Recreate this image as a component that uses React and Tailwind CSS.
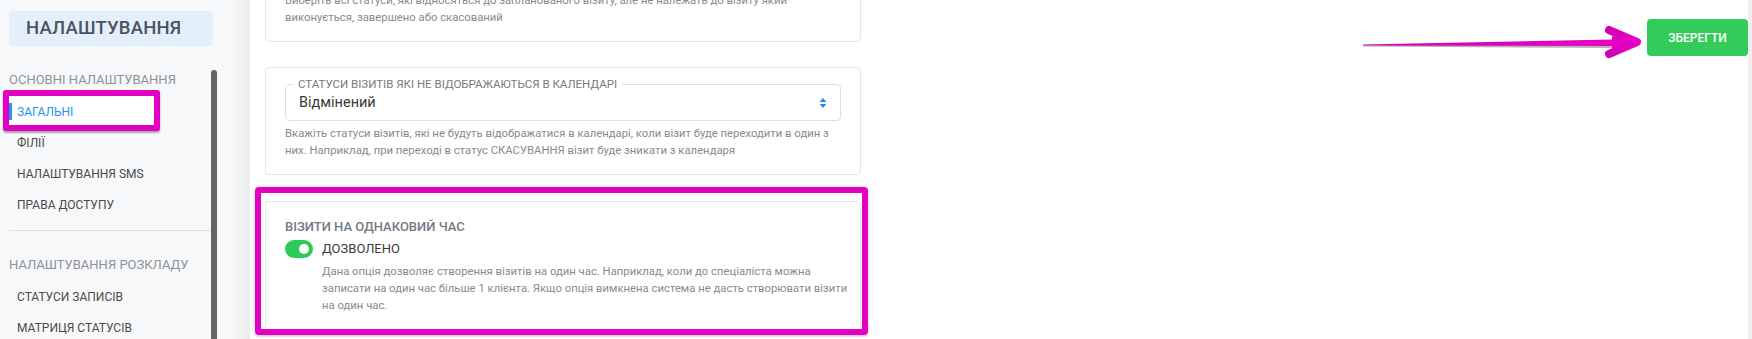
import React from 'react';

const font = { fontFamily: 'Roboto, "Noto Sans", sans-serif' };

const SelectArrows = () => (
    <svg width="8" height="10" viewBox="0 0 8 10" className="shrink-0">
        <path d="M4 0 L7.5 4 L0.5 4 Z" fill="#2d8cf0" />
        <path d="M4 10 L7.5 6 L0.5 6 Z" fill="#2d8cf0" />
    </svg>
);

const StatusCard = ({ label, value, help, className }) => (
    <div className={"rounded-[4px] border border-[#e5e8ec] bg-white px-[19px] pt-[16px] pb-[15px] " + className}>
        <div className="relative flex h-[37px] items-center justify-between rounded-[4px] border border-[#dcdfe4] pl-[13px] pr-[13px]">
            <span className="absolute -top-[9px] left-[7px] bg-white px-[5px] text-[11.5px] leading-[16px] text-[#7a7a7a]">{label}</span>
            <span className="text-[14.5px] text-[#3a3a3a]">{value}</span>
            <SelectArrows />
        </div>
        <p className="mt-[4px] text-[11.3px] leading-[17px] text-[#8a8a8a]">{help}</p>
    </div>
);

const SideItem = ({ children }) => (
    <div className="flex h-[31px] shrink-0 items-center pl-[8px] text-[12px] text-[#4a4a4a]">{children}</div>
);

const Sidebar = () => {
    const main = ["ФІЛІЇ", "НАЛАШТУВАННЯ SMS", "ПРАВА ДОСТУПУ"];
    const schedule = ["СТАТУСИ ЗАПИСІВ", "МАТРИЦЯ СТАТУСІВ"];

    return (
        <div className="flex w-[233px] shrink-0 flex-col bg-[#f7f8fa] pl-[9px]">
            <div className="mt-[11px] flex h-[35px] w-[204px] shrink-0 items-center rounded-[4px] bg-[#e3f0fc] pl-[17px]">
                <span className="text-[18.5px] font-medium tracking-[0.2px] text-[#4b5360]">НАЛАШТУВАННЯ</span>
            </div>
            <div className="mt-[24px] flex shrink-0">
                <div className="w-[202px]">
                    <div className="h-[20px] text-[13px] leading-[20px] text-[#8d9299]">ОСНОВНІ НАЛАШТУВАННЯ</div>
                    <div className="relative mt-[6px] flex h-[31px] items-center">
                        {/* annotation frame */}
                        <div className="absolute -left-[6px] -top-[6px] h-[41px] w-[157px] rounded-[3px] border-[6px] border-[#e200c3] bg-white shadow-[0_2px_2px_rgba(0,0,0,0.35)]" />
                        <span className="relative h-[17px] w-[3px] bg-[#2196f3]" />
                        <span className="relative ml-[5px] text-[12px] text-[#2196f3]">ЗАГАЛЬНІ</span>
                    </div>
                    {main.map((item) => (
                        <SideItem key={item}>{item}</SideItem>
                    ))}
                    <div className="mt-[10px] h-px bg-[#dfe3e8]" />
                    <div className="mt-[24px] h-[20px] text-[13px] leading-[20px] text-[#8d9299]">НАЛАШТУВАННЯ РОЗКЛАДУ</div>
                    <div className="mt-[6px]">
                        {schedule.map((item) => (
                            <SideItem key={item}>{item}</SideItem>
                        ))}
                    </div>
                </div>
                <div className="h-[300px] w-[6px] rounded-full bg-[#646464]" />
            </div>
        </div>
    );
};

const Arrow = () => (
    <svg className="absolute left-[1360px] top-[22px]" width="290" height="42" viewBox="1360 22 290 42">
        <defs>
            <linearGradient id="arrowFill" x1="0" y1="0" x2="1" y2="0">
                <stop offset="0" stopColor="#d000b4" />
                <stop offset="1" stopColor="#e800c8" />
            </linearGradient>
        </defs>
        <polygon points="1363,45.5 1612,42 1612,48 1363,46.5" fill="#8a7a88" opacity="0.6" />
        <polygon points="1363,44.5 1612,39.5 1612,46 1363,45.5" fill="url(#arrowFill)" />
        <path d="M1609,30 L1637,42 L1609,54" fill="none" stroke="url(#arrowFill)" strokeWidth="8" strokeLinecap="round" strokeLinejoin="round" />
        <polygon points="1612,36 1633,42 1612,49" fill="#e300c4" />
    </svg>
);

export default function App() {
    return (
        <div className="relative flex h-[339px] w-[1752px] overflow-hidden bg-white" style={font}>
            <Sidebar />
            <div className="w-[17px] shrink-0 bg-gradient-to-r from-[#f4f4f4] to-[#ececec]" />

            <div className="flex flex-1">
                <div className="ml-[15px] w-[596px] shrink-0">
                    <StatusCard
                        className="-mt-[66px]"
                        label="ЗАПЛАНОВАНІ СТАТУСИ ВІЗИТІВ"
                        value="Записаний"
                        help="Виберіть всі статуси, які відносяться до запланованого візиту, але не належать до візиту який виконується, завершено або скасований"
                    />
                    <StatusCard
                        className="mt-[25px]"
                        label="СТАТУСИ ВІЗИТІВ ЯКІ НЕ ВІДОБРАЖАЮТЬСЯ В КАЛЕНДАРІ"
                        value="Відмінений"
                        help="Вкажіть статуси візитів, які не будуть відображатися в календарі, коли візит буде переходити в один з них. Наприклад, при переході в статус СКАСУВАННЯ візит буде зникати з календаря"
                    />

                    <div className="relative mt-[26px] rounded-[4px] border border-[#e5e8ec] bg-white pl-[19px] pr-[11px] pt-[17px] pb-[16px]">
                        {/* annotation frame */}
                        <div className="absolute -left-[11px] -top-[15px] h-[148px] w-[613px] rounded-[4px] border-[6px] border-[#e200c3] shadow-[0_1px_3px_rgba(0,0,0,0.3)]" />
                        <div className="text-[13px] font-medium leading-[16px] text-[#737a85]">ВІЗИТИ НА ОДНАКОВИЙ ЧАС</div>
                        <div className="mt-[5px] flex h-[18px] items-center">
                            <div className="flex h-[18px] w-[28px] items-center justify-end rounded-full bg-[#2ec95a] pr-[4px]">
                                <span className="h-[10px] w-[10px] rounded-full bg-white" />
                            </div>
                            <span className="ml-[9px] text-[13px] text-[#3c3c3c]">ДОЗВОЛЕНО</span>
                        </div>
                        <p className="mt-[5px] pl-[37px] text-[11.3px] leading-[17px] text-[#8a8a8a]">
                            Дана опція дозволяє створення візитів на один час. Наприклад, коли до спеціаліста можна записати на один час більше 1 клієнта. Якщо опція вимкнена система не дасть створювати візити на один час.
                        </p>
                    </div>
                </div>

                <div className="flex flex-1 justify-end">
                    <button className="mt-[19px] flex h-[37px] w-[101px] items-center justify-center rounded-[4px] bg-[#33cb5a] text-[12px] font-medium text-white">
                        ЗБЕРЕГТИ
                    </button>
                </div>
                <div className="w-[4px] shrink-0 bg-[#f0f0f0]" />
            </div>

            <Arrow />
        </div>
    );
}
